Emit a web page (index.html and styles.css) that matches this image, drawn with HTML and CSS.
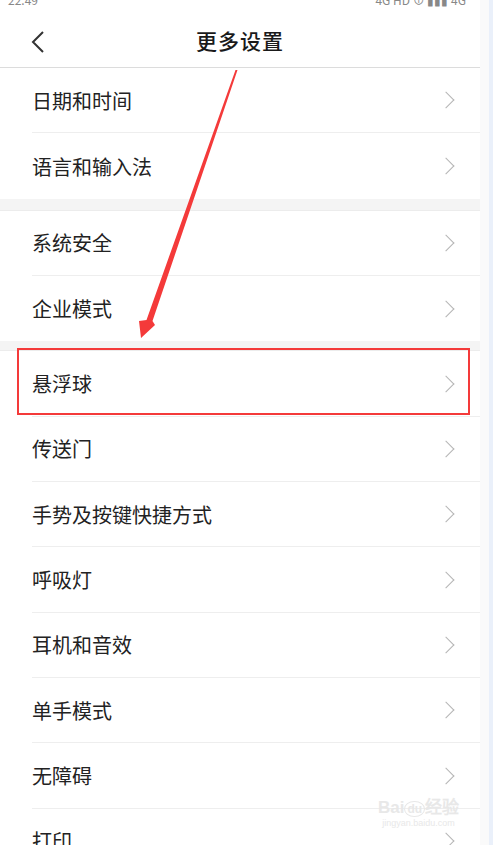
FILE: index.html
```html
<!DOCTYPE html>
<html lang="zh-CN">

<head>
    <meta charset="UTF-8">
    <meta name="viewport" content="width=device-width, initial-scale=1.0">
    <title>更多设置</title>
    <link rel="stylesheet" href="styles.css">
</head>

<body>
    <div class="page">
        <div class="screen">
            <div class="status">
                <span class="status-time">22:49</span>
                <span class="status-icons">4G HD ⊕ ▮▮▮ 4G</span>
            </div>

            <div class="header">
                <svg class="back" width="14" height="22" viewBox="0 0 14 22">
                    <path d="M12 1 L2 11 L12 21" fill="none" stroke="#333" stroke-width="2"/>
                </svg>
                <h1>更多设置</h1>
            </div>

            <div class="group">
                <div class="row"><span>日期和时间</span><i class="chev"></i></div>
                <div class="row last"><span>语言和输入法</span><i class="chev"></i></div>
            </div>
            <div class="gap"></div>
            <div class="group">
                <div class="row"><span>系统安全</span><i class="chev"></i></div>
                <div class="row last"><span>企业模式</span><i class="chev"></i></div>
            </div>
            <div class="gap small"></div>
            <div class="group">
                <div class="row"><span>悬浮球</span><i class="chev"></i></div>
                <div class="row"><span>传送门</span><i class="chev"></i></div>
                <div class="row"><span>手势及按键快捷方式</span><i class="chev"></i></div>
                <div class="row"><span>呼吸灯</span><i class="chev"></i></div>
                <div class="row"><span>耳机和音效</span><i class="chev"></i></div>
                <div class="row"><span>单手模式</span><i class="chev"></i></div>
                <div class="row"><span>无障碍</span><i class="chev"></i></div>
                <div class="row"><span>打印</span><i class="chev"></i></div>
            </div>

            <div class="watermark">
                <div class="wm-logo">Bai<span class="wm-du">du</span>经验</div>
                <div class="wm-url">jingyan.baidu.com</div>
            </div>
        </div>
        <div class="edge"></div>
        <div class="edge-blue"></div>

        <svg class="marks" width="493" height="845" viewBox="0 0 493 845">
            <polygon points="235.5,70 237.5,70 152.5,321 155,325 141,338 139,321 146.5,320" fill="#f43a3a"/>
            <rect x="18" y="349" width="451" height="65" fill="none" stroke="#f43a3a" stroke-width="2"/>
        </svg>
    </div>
</body>
</html>
```

FILE: styles.css
```css
body {
    margin: 0;
    font-family: "Noto Sans CJK SC", "Noto Sans", sans-serif;
    background: #fff;
    color: #222;
    overflow: hidden;
}

.page {
    display: flex;
    height: 845px;
    overflow: hidden;
    position: relative;
}

.screen {
    width: 480px;
    flex: none;
    background: #fff;
    position: relative;
}

.edge {
    width: 9px;
    background: #fafafa;
}

.edge-blue {
    flex: 1;
    background: #eaf0fa;
}

.status {
    height: 8px;
    overflow: hidden;
    display: flex;
    justify-content: space-between;
    padding: 0 14px 0 8px;
    color: #888;
    font-size: 12px;
    line-height: 1;
}

.status span {
    margin-top: -6px;
}

.header {
    height: 59px;
    border-bottom: 1px solid #dcdcdc;
    display: flex;
    align-items: center;
    justify-content: center;
    position: relative;
}

.back {
    position: absolute;
    left: 31px;
    top: 23px;
}

.header h1 {
    margin: 4px 0 0;
    font-size: 21px;
    font-weight: 500;
    color: #1a1a1a;
    letter-spacing: 1px;
}

.row {
    height: 65.35px;
    box-sizing: border-box;
    margin-left: 32px;
    padding-right: 24px;
    border-bottom: 1px solid #eeeeee;
    display: flex;
    align-items: center;
    justify-content: space-between;
    font-size: 20px;
    color: #222;
}

.row.last {
    border-bottom: none;
}

.chev {
    width: 11px;
    height: 11px;
    border-top: 1.5px solid #b5b5b5;
    border-right: 1.5px solid #b5b5b5;
    transform: rotate(45deg);
    margin-right: 4px;
}

.gap {
    height: 11px;
    background: #f4f4f4;
    border-bottom: 1px solid #ececec;
}

.gap.small {
    height: 9px;
}

.watermark {
    position: absolute;
    left: 378px;
    top: 793px;
    color: #e8e8e8;
    text-align: center;
    font-family: "Liberation Sans", sans-serif;
}

.wm-logo {
    font-size: 17px;
    font-weight: bold;
}

.wm-du {
    border: 1px solid #e8e8e8;
    border-radius: 50%;
    padding: 0 2px;
    font-size: 12px;
}

.wm-url {
    font-size: 9px;
}

.marks {
    position: absolute;
    left: 0;
    top: 0;
    pointer-events: none;
}
```
